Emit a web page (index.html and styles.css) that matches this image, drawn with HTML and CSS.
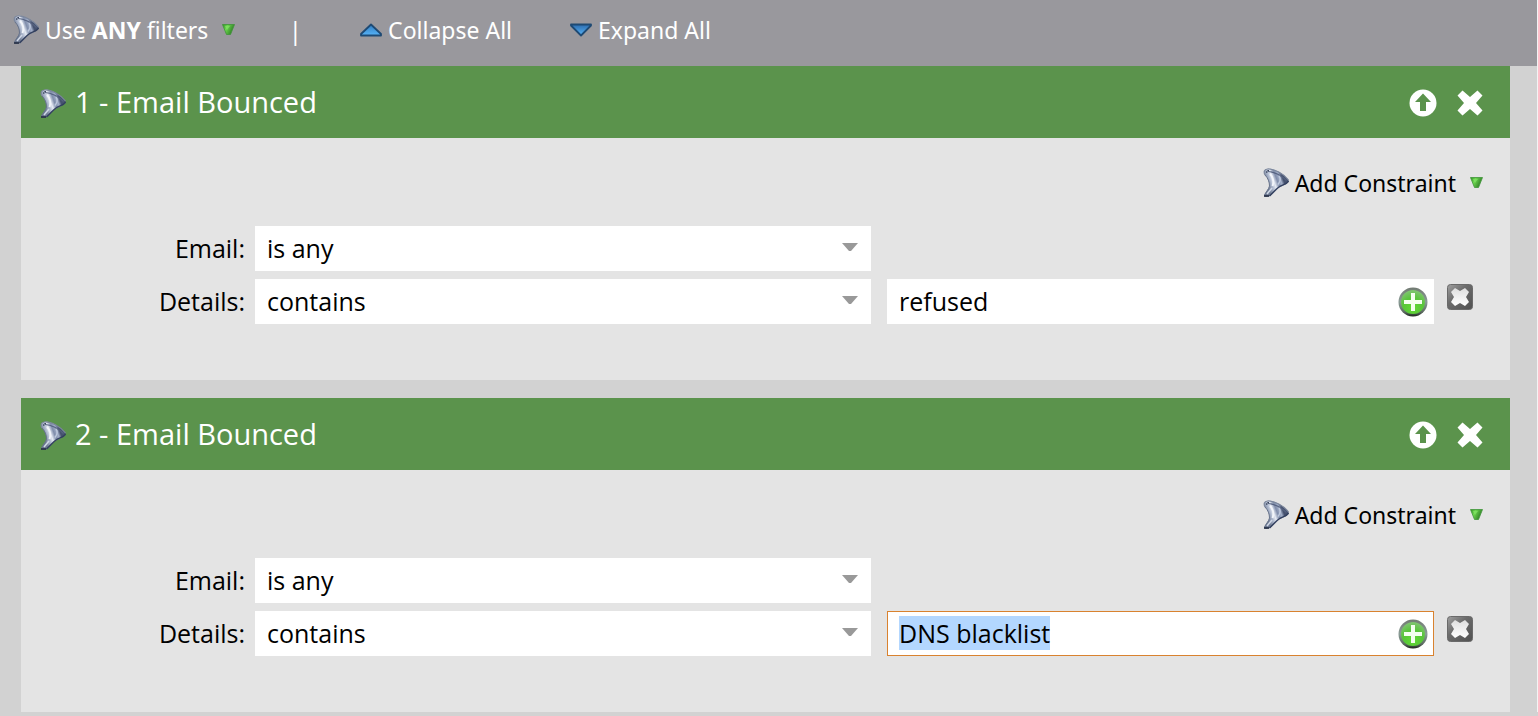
FILE: index.html
```
<!DOCTYPE html>
<html lang="en">
<head>
    <meta charset="UTF-8">
    <meta name="viewport" content="width=device-width, initial-scale=1.0">
    <title>Email Bounced filters</title>
    <link rel="stylesheet" href="styles.css">
</head>
<body>
    <!-- shared icons -->
    <svg class="sprite" aria-hidden="true">
        <defs>
            <linearGradient id="funnel-body" gradientUnits="userSpaceOnUse" x1="4" y1="17" x2="20" y2="11">
                <stop offset="0" stop-color="#6c7890"/>
                <stop offset="0.25" stop-color="#a9b4ca"/>
                <stop offset="0.45" stop-color="#e6ebf4"/>
                <stop offset="0.65" stop-color="#7f8dab"/>
                <stop offset="0.85" stop-color="#a3afc8"/>
                <stop offset="1" stop-color="#46526f"/>
            </linearGradient>
            <linearGradient id="green-tri" x1="0" y1="0" x2="1" y2="0.4">
                <stop offset="0" stop-color="#2f8a24"/>
                <stop offset="0.4" stop-color="#6cd84e"/>
                <stop offset="1" stop-color="#2c7a24"/>
            </linearGradient>
            <linearGradient id="blue-up" x1="0" y1="0" x2="0" y2="1">
                <stop offset="0" stop-color="#2f7cc0"/>
                <stop offset="1" stop-color="#58b4f8"/>
            </linearGradient>
            <linearGradient id="blue-down" x1="0" y1="0" x2="0" y2="1">
                <stop offset="0" stop-color="#2c6cae"/>
                <stop offset="1" stop-color="#58b4f8"/>
            </linearGradient>
            <linearGradient id="plus-ring" x1="0" y1="0" x2="0" y2="1">
                <stop offset="0" stop-color="#727a72"/>
                <stop offset="0.5" stop-color="#8a9c96"/>
                <stop offset="0.85" stop-color="#5c6a60"/>
                <stop offset="1" stop-color="#1c241c"/>
            </linearGradient>
            <radialGradient id="plus-fill" cx="0.5" cy="0.75" r="0.7">
                <stop offset="0" stop-color="#62da34"/>
                <stop offset="0.6" stop-color="#58c43a"/>
                <stop offset="1" stop-color="#7cc46c"/>
            </radialGradient>
            <linearGradient id="remove-fill" x1="0" y1="0" x2="1" y2="1">
                <stop offset="0" stop-color="#a0a0a0"/>
                <stop offset="0.4" stop-color="#6c6c6c"/>
                <stop offset="1" stop-color="#505050"/>
            </linearGradient>
            <linearGradient id="remove-x" x1="0" y1="0" x2="0" y2="1">
                <stop offset="0" stop-color="#dedede"/>
                <stop offset="1" stop-color="#ffffff"/>
            </linearGradient>
        </defs>
        <symbol id="funnel" viewBox="0 0 26 29">
            <path d="M1 4 C1 1 5 0 9 1 C16 3 23 8 25.500 12 C26.500 15 22 17 18 18.500 C14 20 11 24 7 28 L3 29 L1 28 C1 26 6 21 6.500 18 C6.500 14 5 10 2 7 Z" fill="url(#funnel-body)"/>
            <path d="M2 7 C5 10 6.500 14 6.500 18 C6 21 2 25 1.500 27.500" fill="none" stroke="#67738b" stroke-width="1"/>
            <path d="M25.500 13 C24 16 19 17 16 19 C13 21 10 25 6.500 28" fill="none" stroke="#33405f" stroke-width="1.500"/>
            <path d="M5 3.500 C11 3.500 19 8 23.500 12.500" fill="none" stroke="#566280" stroke-width="1.200"/>
            <path d="M2 7 C0.500 4 1 1.500 4.500 1 C11 0.500 21 6 25.500 12" fill="none" stroke="#7d889d" stroke-width="1.200"/>
            <path d="M4 5 C3 3.500 4 2.500 6 2.500" fill="none" stroke="#333d55" stroke-width="1"/>
            <path d="M7 6 C10 9 11 14 9.500 18" fill="none" stroke="#f2f5fa" stroke-width="2"/>
            <path d="M9 20 L4 26" stroke="#cfd7e6" stroke-width="1.600"/>
            <path d="M16 8 C18 11 17 14 15 16.500" fill="none" stroke="#bcc7dc" stroke-width="1.500"/>
            <path d="M1 28 H6" stroke="#232c42" stroke-width="1.600"/>
        </symbol>
        <symbol id="green-down" viewBox="0 0 13 11">
            <path d="M0.500 0.500 H12.500 L8.500 10.500 H4.500 Z" fill="url(#green-tri)" stroke="#3f9438" stroke-width="0.800"/>
            <path d="M3 2 H8 L5 6 Z" fill="#84e468" opacity="0.700"/>
        </symbol>
        <symbol id="tri-up" viewBox="0 0 22 14">
            <path d="M11 1.500 L21 11 V12.500 H1 V11 Z" fill="url(#blue-up)" stroke="#1e4a74" stroke-width="1.800" stroke-linejoin="round"/>
        </symbol>
        <symbol id="tri-down" viewBox="0 0 22 14">
            <path d="M1 1.500 H21 V2.500 L11 12.500 L1 2.500 Z" fill="url(#blue-down)" stroke="#1e4a74" stroke-width="1.800" stroke-linejoin="round"/>
        </symbol>
        <symbol id="move-up" viewBox="0 0 28 28">
            <circle cx="14" cy="14" r="13.500" fill="#fff"/>
            <path d="M14 4.500 L22 13 H17 V22 H11 V13 H6 Z" fill="#5b934c"/>
        </symbol>
        <symbol id="cross" viewBox="0 0 26 26">
            <path d="M5.500 0.500 L13 7 L20.500 0.500 L25.500 5.500 L19 13 L25.500 20.500 L20.500 25.500 L13 19 L5.500 25.500 L0.500 20.500 L7 13 L0.500 5.500 Z" fill="#fff"/>
        </symbol>
        <symbol id="plus" viewBox="0 0 30 30">
            <circle cx="15" cy="15" r="14.500" fill="url(#plus-ring)"/>
            <circle cx="15" cy="15" r="12" fill="url(#plus-fill)"/>
            <path d="M13 6 H17 V13 H24 V17 H17 V24 H13 V17 H6 V13 H13 Z" fill="#f4fff0"/>
        </symbol>
        <symbol id="remove" viewBox="0 0 26 26">
            <rect x="0.500" y="0.500" width="25" height="25" rx="3" fill="url(#remove-fill)" stroke="#6a6a6a"/>
            <path d="M8 4 L13 7 L18 4 L22 8 L19 13 L22 18 L18 22 L13 19 L8 22 L4 18 L7 13 L4 8 Z" fill="url(#remove-x)"/>
        </symbol>
        <symbol id="caret" viewBox="0 0 16 8">
            <path d="M0 0 H16 L9 8 H7 Z" fill="#999"/>
        </symbol>
    </svg>

    <header class="toolbar">
        <button type="button" class="tool tool-match">
            <svg class="icon-funnel"><use href="#funnel"/></svg>
            <span>Use <b>ANY</b> filters</span>
            <svg class="icon-green"><use href="#green-down"/></svg>
        </button>
        <span class="divider">|</span>
        <button type="button" class="tool tool-fold">
            <svg class="icon-blue"><use href="#tri-up"/></svg>
            Collapse All
        </button>
        <button type="button" class="tool tool-fold">
            <svg class="icon-blue"><use href="#tri-down"/></svg>
            Expand All
        </button>
    </header>

    <main class="filters">
        <section class="filter">
            <div class="filter-head">
                <svg class="icon-funnel"><use href="#funnel"/></svg>
                <h2>1 - Email Bounced</h2>
                <button type="button" aria-label="Move up"><svg class="icon-up"><use href="#move-up"/></svg></button>
                <button type="button" aria-label="Delete filter"><svg class="icon-cross"><use href="#cross"/></svg></button>
            </div>
            <div class="filter-body">
                <button type="button" class="tool add-constraint">
                    <svg class="icon-funnel"><use href="#funnel"/></svg>
                    <span>Add Constraint</span>
                    <svg class="icon-green"><use href="#green-down"/></svg>
                </button>
                <div class="row">
                    <label for="email1">Email:</label>
                    <div class="select">
                        <select id="email1">
                            <option>is any</option>
                        </select>
                        <svg class="icon-caret"><use href="#caret"/></svg>
                    </div>
                </div>
                <div class="row">
                    <label for="details1">Details:</label>
                    <div class="select">
                        <select id="details1">
                            <option>contains</option>
                        </select>
                        <svg class="icon-caret"><use href="#caret"/></svg>
                    </div>
                    <div class="field">
                        <input type="text" id="value1" value="refused" aria-label="Details value">
                        <button type="button" aria-label="Add value"><svg class="icon-plus"><use href="#plus"/></svg></button>
                    </div>
                    <button type="button" class="remove" aria-label="Remove constraint"><svg class="icon-remove"><use href="#remove"/></svg></button>
                </div>
            </div>
        </section>

        <section class="filter">
            <div class="filter-head">
                <svg class="icon-funnel"><use href="#funnel"/></svg>
                <h2>2 - Email Bounced</h2>
                <button type="button" aria-label="Move up"><svg class="icon-up"><use href="#move-up"/></svg></button>
                <button type="button" aria-label="Delete filter"><svg class="icon-cross"><use href="#cross"/></svg></button>
            </div>
            <div class="filter-body">
                <button type="button" class="tool add-constraint">
                    <svg class="icon-funnel"><use href="#funnel"/></svg>
                    <span>Add Constraint</span>
                    <svg class="icon-green"><use href="#green-down"/></svg>
                </button>
                <div class="row">
                    <label for="email2">Email:</label>
                    <div class="select">
                        <select id="email2">
                            <option>is any</option>
                        </select>
                        <svg class="icon-caret"><use href="#caret"/></svg>
                    </div>
                </div>
                <div class="row">
                    <label for="details2">Details:</label>
                    <div class="select">
                        <select id="details2">
                            <option>contains</option>
                        </select>
                        <svg class="icon-caret"><use href="#caret"/></svg>
                    </div>
                    <div class="field">
                        <input type="text" id="value2" value="DNS blacklist" aria-label="Details value">
                        <button type="button" aria-label="Add value"><svg class="icon-plus"><use href="#plus"/></svg></button>
                    </div>
                    <button type="button" class="remove" aria-label="Remove constraint"><svg class="icon-remove"><use href="#remove"/></svg></button>
                </div>
            </div>
        </section>
    </main>

    <script>
        // the last value starts out selected, ready to be typed over
        let lastValue = document.getElementById("value2");
        lastValue.focus();
        lastValue.select();
    </script>
</body>
</html>
```
FILE: styles.css
```
* {
    box-sizing: border-box;
}
body {
    margin: 0;
    background-color: #d2d2d2;
    border-right: 1px solid #f4f4f4;
    font-family: "Open Sans", "Noto Sans", sans-serif;
    font-size: 25px;
    color: #000;
}
button, input, select {
    font: inherit;
    color: inherit;
    margin: 0;
    padding: 0;
    border: none;
    background: none;
}
button {
    cursor: pointer;
}
svg {
    display: block;
    flex: none;
}
.sprite {
    position: absolute;
    width: 0;
    height: 0;
}

/* icons */
.icon-funnel {
    width: 26px;
    height: 29px;
}
.icon-green {
    width: 13px;
    height: 11px;
}
.icon-blue {
    width: 22px;
    height: 14px;
}
.icon-up {
    width: 28px;
    height: 28px;
}
.icon-cross, .icon-remove {
    width: 26px;
    height: 26px;
}
.icon-plus {
    width: 30px;
    height: 30px;
}
.icon-caret {
    width: 16px;
    height: 8px;
}

/* top bar */
.toolbar {
    display: flex;
    align-items: center;
    height: 66px;
    padding: 0 13px 7px;
    margin-right: -1px;
    background-color: #99989d;
    color: #fff;
}
.tool {
    display: flex;
    align-items: center;
    gap: 6px;
    font-family: "Noto Sans", "Open Sans", sans-serif;
    font-size: 23px;
    white-space: nowrap;
}
.tool .icon-green {
    margin-left: 8px;
}
.divider {
    margin: 0 58px 0 53px;
}
.tool-fold {
    margin-right: 58px;
}

/* filter panels */
.filters {
    padding: 0 27px 0 21px;
}
.filter {
    margin-bottom: 18px;
    background-color: #e4e4e4;
}
.filter:last-child {
    margin-bottom: 0;
}
.filter-head {
    display: flex;
    align-items: center;
    gap: 20px;
    height: 72px;
    padding: 0 27px 0 19px;
    background-color: #5b934c;
    color: #fff;
}
.filter-head svg {
    margin-top: 2px;
}
.filter-head h2 {
    flex: 1;
    margin: 0 0 0 -11px;
    padding-bottom: 2px;
    font-size: 29px;
    font-weight: normal;
}
.filter-body {
    padding: 28px 37px 56px 0;
}
.add-constraint {
    height: 33px;
    margin: 0 -10px 27px auto;
}
.row {
    display: grid;
    grid-template-columns: 224px 626fr 576fr 26px;
    margin-bottom: 8px;
}
.row:last-child {
    margin-bottom: 0;
}
.row label {
    align-self: center;
    padding-bottom: 2px;
    text-align: right;
}
.select {
    display: grid;
    align-items: center;
    height: 45px;
    margin-left: 10px;
    background-color: #fff;
}
.select select, .select svg {
    grid-area: 1 / 1;
}
.select select {
    appearance: none;
    width: 100%;
    height: 45px;
    padding: 0 40px 2px 12px;
}
.select svg {
    justify-self: end;
    margin: 0 13px 3px 0;
    pointer-events: none;
}
.field {
    display: flex;
    align-items: center;
    height: 45px;
    margin: 0 13px 0 16px;
    padding: 0 5px 0 11px;
    border: 1px solid #fff;
    background-color: #fff;
}
.field:focus-within {
    border-color: #d9822f;
}
.field input {
    flex: 1;
    min-width: 0;
    padding-bottom: 2px;
    outline: none;
}
.field input::selection {
    background-color: #b3d7ff;
    color: #000;
}
.remove {
    align-self: start;
    margin-top: 5px;
}
```
